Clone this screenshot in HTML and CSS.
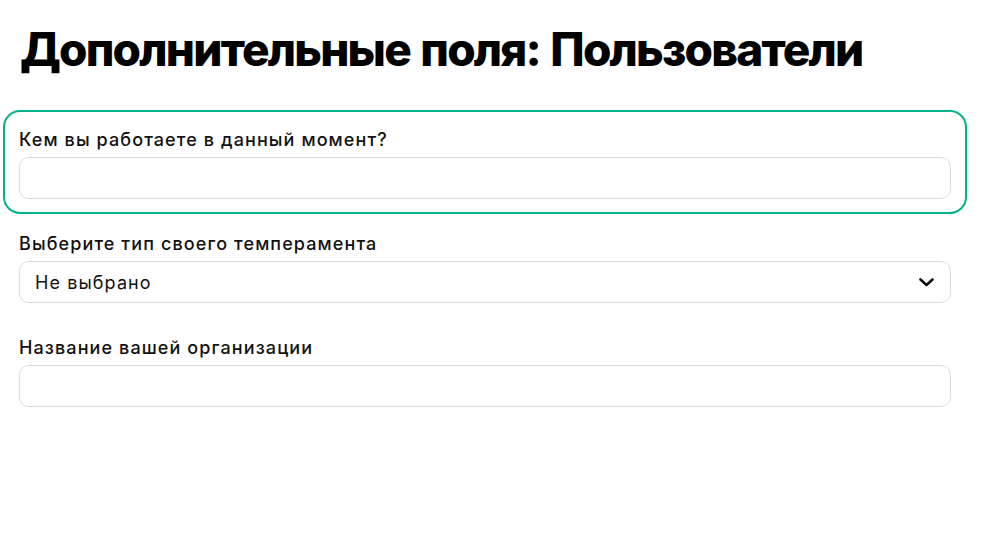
FILE: index.html
```html
<!DOCTYPE html>
<html lang="ru">
<head>
<meta charset="utf-8">
<title>Дополнительные поля: Пользователи</title>
<link rel="stylesheet" href="styles.css">
</head>
<body>
<main class="page">
  <h1 class="title">Дополнительные поля: Пользователи</h1>
  <form class="fields">
    <div class="field field--active">
      <label class="field__label" for="f1">Кем вы работаете в данный момент?</label>
      <input class="field__input" id="f1" type="text">
    </div>
    <div class="field">
      <label class="field__label" for="f2">Выберите тип своего темперамента</label>
      <div class="select" id="f2">
        <span class="select__value">Не выбрано</span>
        <svg class="select__chevron" width="15" height="9" viewBox="0 0 15 9" aria-hidden="true">
          <polyline points="1.5,1.5 7.5,7 13.5,1.5" fill="none" stroke="#111" stroke-width="2.6" stroke-linecap="round" stroke-linejoin="round"/>
        </svg>
      </div>
    </div>
    <div class="field">
      <label class="field__label" for="f3">Название вашей организации</label>
      <input class="field__input" id="f3" type="text">
    </div>
  </form>
</main>
</body>
</html>
```

FILE: styles.css
```css
html, body {
  margin: 0;
  padding: 0;
  background: #ffffff;
}

body {
  font-family: Inter, "Noto Sans", "DejaVu Sans", sans-serif;
  color: #111111;
}

.page {
  padding: 0 20px;
}

.title {
  margin: 21px 0 0;
  font-size: 46px;
  line-height: 56px;
  font-weight: 800;
  color: #000000;
  letter-spacing: -1.8px;
  word-spacing: 2px;
}

.fields {
  display: flex;
  flex-direction: column;
  margin: 33px -4px 0 -17px;
}

.field {
  display: flex;
  flex-direction: column;
  gap: 4px;
  padding: 14px 14px 13px;
  border: 2px solid transparent;
  border-radius: 17px;
}

.field--active {
  border-color: #00b38a;
}

.field__label {
  font-size: 18px;
  line-height: 27px;
  font-weight: 500;
  color: #111111;
  letter-spacing: 1.1px;
}

.field__input,
.select {
  box-sizing: border-box;
  height: 42px;
  width: 100%;
  margin: 0;
  border: 1px solid #dcdcdc;
  border-radius: 10px;
  background: #ffffff;
  font-family: inherit;
  font-size: 18px;
  padding: 0 16px;
}

.select {
  display: flex;
  align-items: center;
  justify-content: space-between;
  padding: 0 16px 0 15px;
}

.select__value {
  font-size: 18px;
  color: #111111;
  letter-spacing: 1.1px;
}

.select__chevron {
  display: block;
}
```
